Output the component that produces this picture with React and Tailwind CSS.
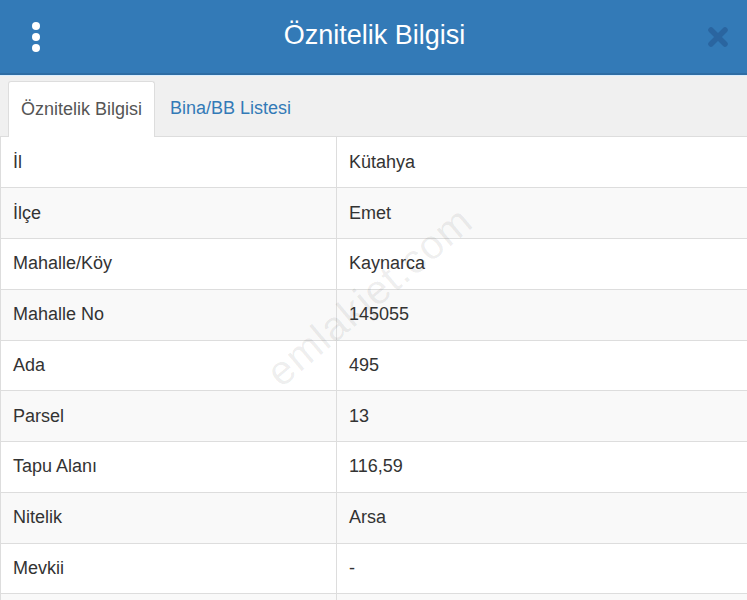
import React from 'react'

const rows = [
  ['İl', 'Kütahya'],
  ['İlçe', 'Emet'],
  ['Mahalle/Köy', 'Kaynarca'],
  ['Mahalle No', '145055'],
  ['Ada', '495'],
  ['Parsel', '13'],
  ['Tapu Alanı', '116,59'],
  ['Nitelik', 'Arsa'],
  ['Mevkii', '-'],
  ['', ''],
]

export default function App() {
  return (
    <div
      className="relative w-[747px] h-[600px] overflow-hidden bg-white text-[#333]"
      style={{ fontFamily: '"Liberation Sans", Arial, sans-serif' }}
    >
      <header className="flex items-center h-[75px] bg-[#337ab7] border-b-2 border-[#2e6da4] px-[30px]">
        <button className="flex flex-col gap-[3px] w-[12px] items-center">
          <span className="w-[8px] h-[8px] rounded-full bg-white" />
          <span className="w-[8px] h-[8px] rounded-full bg-white" />
          <span className="w-[8px] h-[8px] rounded-full bg-white" />
        </button>
        <h1 className="flex-1 text-center text-white text-[27px] leading-none pb-[2px]">Öznitelik Bilgisi</h1>
        <svg width="22" height="22" viewBox="0 0 22 22" className="mr-[-12px]">
          <path d="M4 4 L18 18 M18 4 L4 18" stroke="#2a65a0" strokeWidth="5.5" strokeLinecap="round" />
        </svg>
      </header>
      <div className="h-[1px] bg-[#dbeeff]" />
      <nav className="flex items-end h-[61px] bg-[#f0f0f0] px-[8px] border-b border-[#ddd]">
        <div className="h-[56px] px-[12px] flex items-center bg-white border border-[#ddd] border-b-0 rounded-t-[3px] mb-[-1px] text-[18px] text-[#555]">
          Öznitelik Bilgisi
        </div>
        <div className="h-[56px] px-[15px] flex items-center text-[18px] text-[#337ab7]">Bina/BB Listesi</div>
      </nav>
      <table className="w-full border-collapse text-[18px] border-l border-[#ddd]">
        <tbody>
          {rows.map(([k, v], i) => (
            <tr key={i} className={i % 2 ? 'bg-[#f9f9f9]' : 'bg-white'}>
              <td className="w-[336px] h-[50.75px] px-[12px] border-b border-r border-[#ddd] align-middle">{k}</td>
              <td className="h-[50.75px] px-[12px] border-b border-[#ddd] align-middle">{v}</td>
            </tr>
          ))}
        </tbody>
      </table>
      <div className="absolute left-[243px] top-[266px] -rotate-[40deg] text-[41px] text-black/[0.07] tracking-[1px] pointer-events-none select-none">
        emlakjet.com
      </div>
    </div>
  )
}
